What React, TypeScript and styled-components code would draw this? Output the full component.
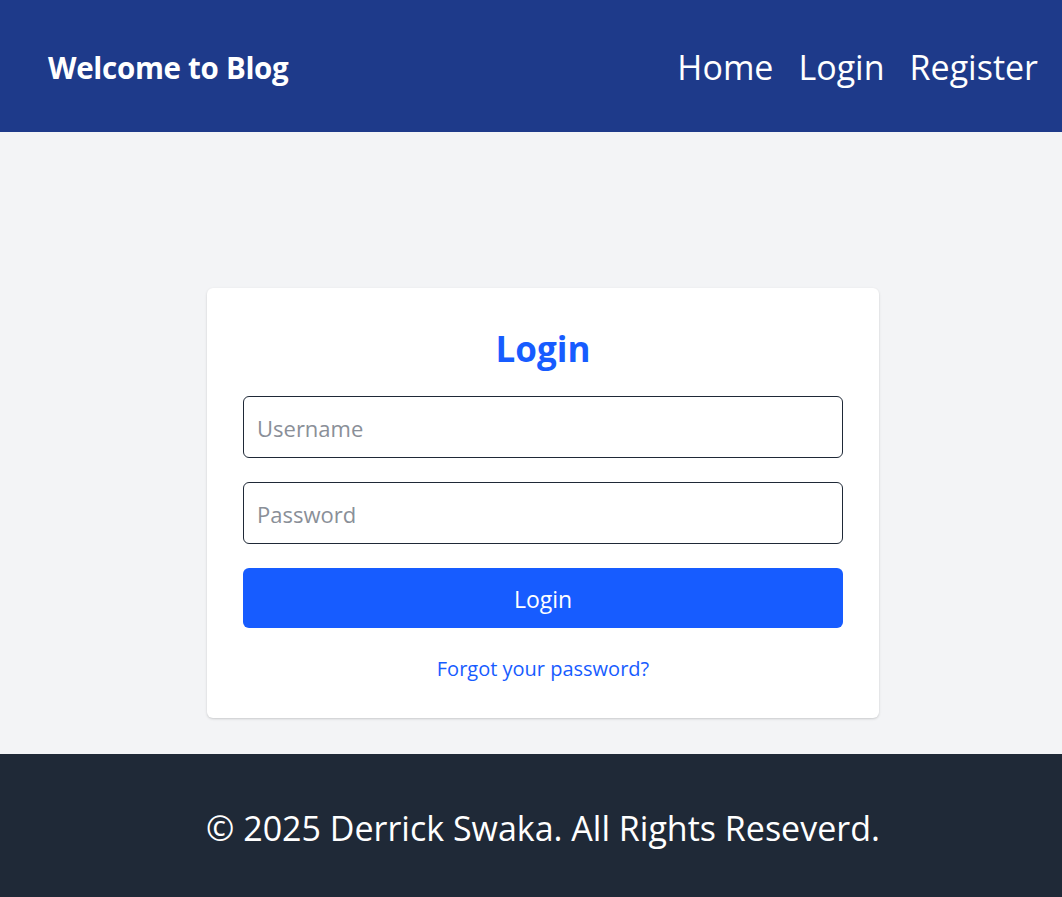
import React from "react";
import styled, { createGlobalStyle } from "styled-components";

const Global = createGlobalStyle`
  html, body { margin: 0; padding: 0; }
  body {
    font-family: "Open Sans", "Noto Sans", sans-serif;
    background: #f3f4f6;
    overflow: hidden;
  }
  * { box-sizing: border-box; }
`;

const Page = styled.div`
  width: 1086px;
  min-height: 897px;
  display: flex;
  flex-direction: column;
`;

const Header = styled.header`
  height: 132px;
  background: #1e3a8a;
  display: flex;
  align-items: center;
  justify-content: space-between;
  padding: 2px 48px 0;
  color: #fff;
`;

const Brand = styled.h1`
  margin: 0;
  font-size: 29.5px;
  font-weight: 700;
  letter-spacing: -0.3px;
`;

const Nav = styled.nav`
  display: flex;
  gap: 25px;
`;

const NavLink = styled.a`
  color: #fff;
  text-decoration: none;
  font-size: 34px;
`;

const Main = styled.main`
  flex: 1;
  display: flex;
  justify-content: center;
  align-items: flex-start;
  padding: 156px 0 36px;
`;

const Card = styled.div`
  width: 672px;
  background: #fff;
  border-radius: 6px;
  box-shadow: 0 1px 3px rgba(0, 0, 0, 0.12), 0 1px 2px rgba(0, 0, 0, 0.06);
  padding: 36px;
  display: flex;
  flex-direction: column;
`;

const Title = styled.h2`
  margin: 0 0 29px;
  padding-top: 7px;
  text-align: center;
  font-size: 35px;
  line-height: 36px;
  font-weight: 700;
  color: #175cff;
`;

const Form = styled.form`
  display: flex;
  flex-direction: column;
  gap: 24px;
`;

const Input = styled.input`
  height: 62px;
  width: 100%;
  border: 1px solid #1f2937;
  border-radius: 6px;
  padding: 2px 13px 0;
  font-family: inherit;
  font-size: 22px;
  color: #111827;
  &::placeholder { color: #8a8f98; }
`;

const Button = styled.button`
  height: 60px;
  border: none;
  border-radius: 6px;
  background: #175cff;
  color: #fff;
  font-family: inherit;
  font-size: 23px;
  padding-top: 2px;
  cursor: pointer;
`;

const Forgot = styled.a`
  display: block;
  margin-top: 28px;
  text-align: center;
  color: #175cff;
  font-size: 20px;
  line-height: 26px;
  text-decoration: none;
`;

const Footer = styled.footer`
  height: 143px;
  background: #1f2937;
  color: #fff;
  display: flex;
  align-items: center;
  justify-content: center;
  font-size: 34px;
  padding-top: 4px;
`;

export default function App() {
  return (
    <Page>
      <Global />
      <Header>
        <Brand>Welcome to Blog</Brand>
        <Nav>
          <NavLink href="#">Home</NavLink>
          <NavLink href="#">Login</NavLink>
          <NavLink href="#">Register</NavLink>
        </Nav>
      </Header>
      <Main>
        <Card>
          <Title>Login</Title>
          <Form onSubmit={(e) => e.preventDefault()}>
            <Input placeholder="Username" />
            <Input placeholder="Password" type="password" />
            <Button type="submit">Login</Button>
          </Form>
          <Forgot href="#">Forgot your password?</Forgot>
        </Card>
      </Main>
      <Footer>© 2025 Derrick Swaka. All Rights Reseverd.</Footer>
    </Page>
  );
}
